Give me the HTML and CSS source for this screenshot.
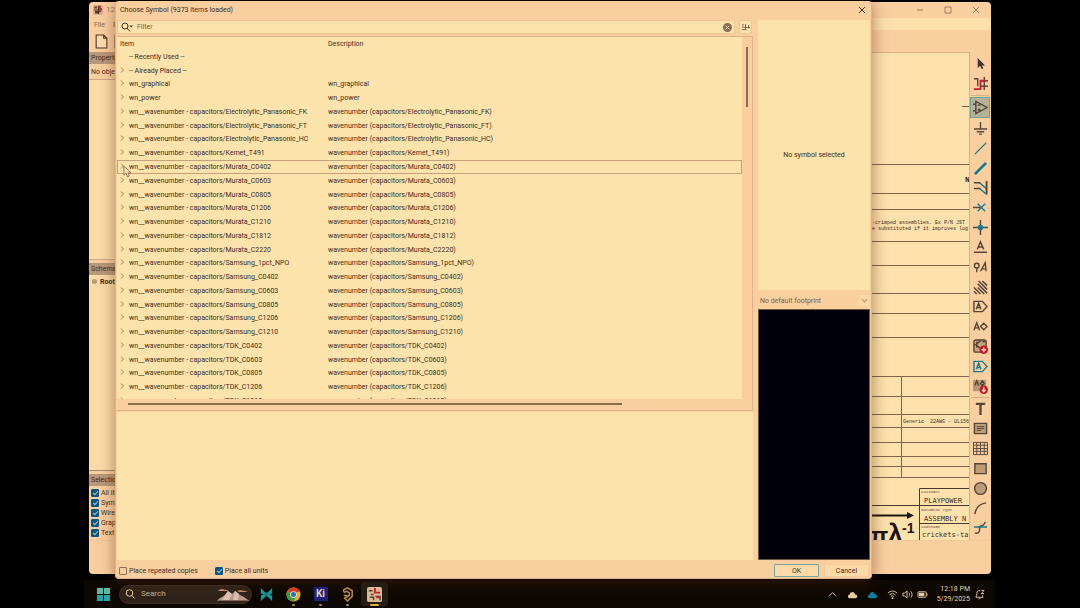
FILE: index.html
```
<!DOCTYPE html>
<html lang="en">
<head>
    <meta charset="UTF-8">
    <title>Choose Symbol</title>
    <meta name="viewport" content="width=device-width,initial-scale=1">
    <link rel="stylesheet" href="styles.css">
</head>
<body>
    <div class="screen">
        <div class="desktop">

            <!-- Schematic editor behind the dialog -->
            <div class="window editor">
                <header class="editor-title">
                    <svg class="app-icon" viewBox="0 0 20 20"><rect width="20" height="20" rx="3" fill="#d9b08c"/><path d="M3 3h5v4H3zM4 12h6v5H4z" fill="#5c3a2e"/><path d="M11 2v16M2 10h16" stroke="#4b3028" stroke-width="2"/><path d="M11 3h3v5h4M12 13h4" stroke="#c62032" stroke-width="3" fill="none"/></svg>
                    <span class="editor-name">12</span>
                    <div class="caption-buttons">
                        <button aria-label="Minimize"><svg viewBox="0 0 8 8"><path d="M1 4h6"/></svg></button>
                        <button aria-label="Maximize"><svg viewBox="0 0 8 8"><path d="M1 1h6v6H1z"/></svg></button>
                        <button aria-label="Close editor"><svg viewBox="0 0 8 8"><path d="M1 1l6 6M7 1L1 7"/></svg></button>
                    </div>
                </header>
                <nav class="menubar">
                    <a href="#">File</a>
                    <a href="#">Edit</a>
                </nav>
                <div class="toolbar">
                    <button aria-label="New"><svg viewBox="0 0 12 14"><path d="M1 1h7l3 3v9H1zM8 1v3h3"/></svg></button>
                    <button aria-label="Open"><svg viewBox="0 0 12 14"><path d="M1 1h10v12H1z"/></svg></button>
                </div>
                <div class="workspace">
                    <aside class="dock">
                        <section class="panel properties">
                            <h2>Properties</h2>
                            <p class="panel-row">No objects selected</p>
                            <div class="panel-box"></div>
                        </section>
                        <section class="panel hierarchy">
                            <h2>Schematic</h2>
                            <p class="root">Root</p>
                        </section>
                        <section class="panel filter">
                            <h2>Selection Filter</h2>
                            <label><input type="checkbox" checked>All items</label>
                            <label><input type="checkbox" checked>Symbols</label>
                            <label><input type="checkbox" checked>Wires</label>
                            <label><input type="checkbox" checked>Graphics</label>
                            <label><input type="checkbox" checked>Text</label>
                        </section>
                    </aside>
                    <main class="canvas">
                        <svg class="sheet" width="97" height="488" viewBox="872 52 97 488">
                            <path class="rule" d="M872 163.500h97M872 192.500h97M872 208.500h97M872 240.500h97M872 264.500h97M872 292.500h97M872 312.500h97M872 336.500h97M872 375.500h97M872 395.500h97M872 413.500h97M872 426.500h97M872 441.500h97M872 455.500h97M872 465.500h97M872 476.500h97M901.500 376v100M962 105.500h7"/>
                            <path class="frame" d="M969 487.500h-49.500V540M872 504.500h97M919 522.500h50"/>
                            <path d="M872 514.500h37" stroke="#1c1412" stroke-width="2"/>
                            <path d="M907 511l7 3.500-7 3.500z" fill="#1c1412"/>
                            <text class="bold" x="965" y="181" font-size="8">N</text>
                            <text x="872" y="223" font-size="5">-crimped assemblies. Ex P/N JST</text>
                            <text x="872" y="229" font-size="5">e substituted if it improves log</text>
                            <text x="903" y="422" font-size="5" xml:space="preserve">Generic  22AWG - UL156</text>
                            <text class="caption" x="921" y="492" font-size="4">Customer</text>
                            <text class="entry" x="924" y="502" font-size="7">PLAYPOWER</text>
                            <text class="caption" x="921" y="510" font-size="4">Document Type</text>
                            <text class="entry" x="924" y="520" font-size="7">ASSEMBLY N</text>
                            <text class="caption" x="921" y="527" font-size="4">Codename</text>
                            <text class="entry" x="922" y="536" font-size="7">crickets-ta</text>
                            <text class="formula" x="870" y="543" font-size="24">π</text>
                            <text class="formula" x="888" y="541" font-size="26">λ</text>
                            <text class="formula" x="902" y="532" font-size="14">-1</text>
                        </svg>
                    </main>
                    <div class="tools">
                        <button aria-label="Select"><svg viewBox="0 0 16 16"><path d="M5 2v11l2.500-2.500L9.500 14l1.500-1-1.500-3H13z" fill="#42352b" stroke="none"/></svg></button>
                        <button aria-label="Highlight net"><svg viewBox="0 0 16 16"><path d="M1 3h4v8M12 1v14M8 11h8M8 5h8"/><path class="red" d="M1 14h7V5h6"/></svg></button>
                        <hr>
                        <button class="active" aria-label="Place symbol"><svg viewBox="0 0 16 16"><path d="M3 1.500v13L15 8zM0 4.500h3M0 11.500h3M5 5.500h3M5 10.500h3M6.500 9v3"/></svg></button>
                        <button aria-label="Place power"><svg viewBox="0 0 16 16"><path d="M8 1v7M1 8.500h14M4 11.500h8M6.500 14h3"/></svg></button>
                        <button aria-label="Draw wire"><svg viewBox="0 0 16 16"><path class="teal" d="M2 14L14 2"/></svg></button>
                        <button aria-label="Draw bus"><svg viewBox="0 0 16 16"><path class="teal thick" d="M2 14L14 2"/></svg></button>
                        <button aria-label="Wire to bus entry"><svg viewBox="0 0 16 16"><path class="teal" d="M7 3l7 6M7 9l7 6"/><path d="M1 3h7M1 9h7"/><path d="M14.500 1v14.500" stroke-width="2"/></svg></button>
                        <button aria-label="No connect"><svg viewBox="0 0 16 16"><path d="M0 8h8"/><path class="teal" d="M5 4l8 8M13 4l-8 8"/></svg></button>
                        <button aria-label="Junction"><svg viewBox="0 0 16 16"><path d="M8 0v16M0 8h16"/><circle cx="8" cy="8" r="3" fill="#177a90" stroke="none"/></svg></button>
                        <button aria-label="Net label"><svg viewBox="0 0 16 16"><path d="M4.500 10L8 2l3.500 8M6 7.500h4M1 13h14"/></svg></button>
                        <button aria-label="Net class"><svg viewBox="0 0 16 16"><circle cx="4" cy="6" r="2.500"/><path d="M4 8.500V13M8 12l5-9 1 9M10 9.500h4"/></svg></button>
                        <button aria-label="Rule area"><svg viewBox="0 0 16 16"><path d="M10 1l5 5M6 1l9 9M5 4l10 10M5 8l7 7M1 8l7 7M1 12l3 3" stroke-width="1.600"/></svg></button>
                        <button aria-label="Global label"><svg viewBox="0 0 16 16"><path d="M1 2.500h9l5 5.500-5 5.500H1zM3.500 11L6 4.500 8.500 11M4.500 9h3"/></svg></button>
                        <button aria-label="Hierarchical label"><svg viewBox="0 0 16 16"><path d="M1 12l3-8 3 8M2 9.500h4M8 8l3.500-3.500L15 8l-3.500 3.500z"/></svg></button>
                        <button aria-label="Add sheet"><svg viewBox="0 0 16 16"><rect x="1" y="1" width="13" height="13" rx="2" fill="#c8a57c"/><path d="M1 6h3M4 3v6M4 5l4-3M4 7l4 3M10 3h3"/><circle class="badge" cx="11.500" cy="11.500" r="4.500"/><path class="mark" d="M11.500 9v5M9 11.500h5"/></svg></button>
                        <button aria-label="Sheet pin"><svg viewBox="0 0 16 16"><path class="teal" d="M1 2.500h9l5 5.500-5 5.500H1zM3.500 11L6 4.500 8.500 11M4.500 9h3"/></svg></button>
                        <button aria-label="Sync pins"><svg viewBox="0 0 16 16"><path d="M0 1h14v12H0z" fill="#b59873" stroke="none"/><path d="M2 7l2-5 2 5M8 5l2-3 2 3-2 2z"/><circle class="badge" cx="11.500" cy="11.500" r="4.500"/><path class="mark" d="M11.500 8.500v5M9.500 11.500l2 2 2-2"/></svg></button>
                        <hr>
                        <button aria-label="Text"><svg viewBox="0 0 16 16"><path d="M3 3h10M8 3v12" stroke-width="2.500"/></svg></button>
                        <button aria-label="Text box"><svg viewBox="0 0 16 16"><path d="M1.500 2.500h13v11h-13z" fill="#bc9d78"/><path d="M4 6h8M4 8h8M4 10h5" stroke-width="1"/></svg></button>
                        <button aria-label="Table"><svg viewBox="0 0 16 16"><path d="M.5 1.500h15v13H.5zM.5 4.500h15M.5 8h15M.5 11h15M4 1.500v13M8 1.500v13M12 1.500v13" stroke-width="1"/></svg></button>
                        <button aria-label="Rectangle"><svg viewBox="0 0 16 16"><path d="M2 3h12v10.500H2z" fill="#bc9d78"/></svg></button>
                        <button aria-label="Circle"><svg viewBox="0 0 16 16"><circle cx="8" cy="8" r="6.300" fill="#bc9d78"/></svg></button>
                        <button aria-label="Arc"><svg viewBox="0 0 16 16"><path d="M2 14C3 7 7 3 14 2"/></svg></button>
                        <button aria-label="Bezier"><svg viewBox="0 0 16 16"><path d="M2 14c6 1 5-4 5-6.500s4 1 6-5.500"/><path class="teal" d="M1 7.500h14"/></svg></button>
                    </div>
                </div>
                <footer class="statusbar"></footer>
            </div>

            <!-- Choose symbol dialog -->
            <div class="window dialog" role="dialog" aria-labelledby="dialogTitle">
                <header class="dialog-title">
                    <h1 id="dialogTitle">Choose Symbol (9373 items loaded)</h1>
                    <button class="close-btn" aria-label="Close"><svg viewBox="0 0 8 8"><path d="M1 1l6 6M7 1L1 7"/></svg></button>
                </header>
                <div class="dialog-body">
                    <div class="library">
                        <div class="search-row">
                            <div class="search-box">
                                <svg class="search-icon" viewBox="0 0 12 10"><circle cx="4" cy="4" r="3"/><path d="M6 6l3 3.500"/><path class="arrow" d="M8.500 3.500h3.500l-1.700 2z"/></svg>
                                <input type="text" placeholder="Filter" aria-label="Filter">
                                <button class="clear-btn" aria-label="Clear"><svg viewBox="0 0 10 10"><circle cx="5" cy="5" r="5" stroke="none"/><path d="M3 3l4 4M7 3L3 7"/></svg></button>
                            </div>
                            <button class="sort-btn" aria-label="Sort"><svg viewBox="0 0 10 8"><path d="M1 1h2M1 3.500h2M1 6.500h5M5 0v5M3.500 3.500L5 5l1.500-1.500M7 4h3M8.500 1v4"/></svg></button>
                        </div>
                        <div class="tree">
                            <div class="tree-view">
                                <table>
                                    <thead>
                                        <tr><th class="col-item">Item</th><th>Description</th></tr>
                                    </thead>
                                    <tbody id="treeBody"></tbody>
                                </table>
                            </div>
                            <div class="scroll-v"><div class="thumb"></div></div>
                            <div class="scroll-h"><div class="thumb"></div></div>
                        </div>
                        <div class="details"></div>
                    </div>
                    <div class="preview">
                        <div class="symbol-preview">No symbol selected</div>
                        <div class="footprint-select">
                            <select aria-label="Footprint" disabled>
                                <option>No default footprint</option>
                            </select>
                            <svg viewBox="0 0 8 8"><path d="M2 3l2 2 2-2"/></svg>
                        </div>
                        <div class="footprint-preview"></div>
                    </div>
                </div>
                <footer class="dialog-footer">
                    <label><input type="checkbox">Place repeated copies</label>
                    <label><input type="checkbox" checked>Place all units</label>
                    <div class="actions">
                        <button class="ok-btn">OK</button>
                        <button>Cancel</button>
                    </div>
                </footer>
            </div>
        </div>

        <div class="taskbar">
            <button class="task" aria-label="Start"><svg viewBox="0 0 16 16"><path d="M1 1h6.500v6.500H1zM8.500 1H15v6.500H8.500z" fill="#5fb8a0"/><path d="M1 8.500h6.500V15H1zM8.500 8.500H15V15H8.500z" fill="#2f9fa8"/></svg></button>
            <div class="task-search">
                <svg viewBox="0 0 10 10"><circle cx="4.500" cy="4" r="3.300"/><path d="M7 6.500L9.500 9.500"/></svg>
                <input type="text" placeholder="Search" aria-label="Search">
                <svg class="scene" viewBox="0 0 32 14"><path d="M1 13c2-3 5-3 7-5l3-4 4 3 3-3 5 4 4 2 4 3z" fill="#b8998c"/><path d="M11 4l4 3-3 6H5l3-5zM18 4l4 3-1 6h-5z" fill="#dcc0b0"/><path d="M1 3c2 0 2-1 4-1s2 1 6 1v1H2zM20 4c2-1 4-1 8 0l3 1h-9z" fill="#c68d68"/><path d="M0 13h32v1H0z" fill="#80655c"/></svg>
            </div>
            <button class="task" aria-label="Editor"><svg viewBox="0 0 16 16"><path d="M2 1l5 5V10l-5 5V9l3-1-3-1zM14 1L9 6v4l5 5V9l-3-1 3-1z" fill="#169a9b"/><path d="M6 6h4v4H6z" fill="#23797f"/></svg></button>
            <button class="task running" aria-label="Chrome"><svg viewBox="0 0 16 16"><circle cx="8" cy="8" r="7.500" fill="#e8b422"/><path d="M8 8L1.500 4.300A7.500 7.500 0 0 1 14.500 4.300z" fill="#d83a2a"/><path d="M8 8L1.500 4.300A7.500 7.500 0 0 0 8 15.500l3-6z" fill="#3a9c4c"/><path d="M8 4.300h6.500" stroke="#d83a2a"/><circle cx="8" cy="8" r="3.600" fill="#f6dfb8"/><circle cx="8" cy="8" r="2.700" fill="#2c73b8"/></svg></button>
            <button class="task running" aria-label="KiCad"><span class="kicad">Ki</span></button>
            <button class="task running" aria-label="Altium"><svg viewBox="0 0 16 16"><path d="M4 5V3l4-2 5 3v6l-5 5-3-3 5-3V6L7 4.500 4 6M4 9h4" fill="none" stroke="#b98b46" stroke-width="1.600"/></svg></button>
            <button class="task running current" aria-label="Schematic editor"><svg viewBox="0 0 16 16"><rect width="16" height="16" rx="2" fill="#dcb996"/><path d="M2 4h4M3 11h4v3M9 10h5v4M4 8h3" stroke="#5a4034" stroke-width="1.500" fill="none"/><path d="M8.500 1v5H14M10 11h4" stroke="#c62032" stroke-width="2" fill="none"/></svg></button>
            <div class="tray">
                <svg viewBox="0 0 12 12"><path d="M2 8l4-4 4 4" class="line"/></svg>
                <svg viewBox="0 0 12 12"><path d="M2.500 10C0 9 1 6 3 6c1-4 5-3 6 0 3 0 3 4 0 4z" fill="#e8cda6"/></svg>
                <svg viewBox="0 0 12 12"><path d="M2.500 10C0 9 1 6 3 6c1-4 5-3 6 0 3 0 3 4 0 4z" fill="#137f9a"/></svg>
                <div class="quick">
                    <svg viewBox="0 0 12 12"><path class="line" d="M1 4.500c3-3 7-3 10 0M2.700 6.500c2-2 4.600-2 6.600 0M4.300 8.300c1-1 2.400-1 3.400 0"/><circle cx="6" cy="10" r="1" fill="#e8cda6"/></svg>
                    <svg viewBox="0 0 12 12"><path class="line" d="M1 4.500h2L5.500 2v8L3 7.500H1zM7.500 4c1 1 1 3 0 4M9.500 2.500c2 2 2 5 0 7"/></svg>
                    <svg viewBox="0 0 12 12"><rect x="1" y="3" width="9" height="6" rx="1" class="line"/><path d="M2 4h6v4H2zM10.500 5h1v2h-1z" fill="#e8cda6"/></svg>
                </div>
                <div class="clock"><span>12:18 PM</span><span>5/29/2025</span></div>
                <svg viewBox="0 0 12 12"><path class="line" d="M7 2C4 1 3 3 3 5v2L2 9h8L9 7M5 10.500h2M8 1.500h3L8 5h3"/></svg>
            </div>
        </div>
    </div>

    <script>
        const groups = ['wn_graphical', 'wn_power'];
        const libraries = [
            'Electrolytic_Panasonic_FK', 'Electrolytic_Panasonic_FT', 'Electrolytic_Panasonic_HC',
            'Kemet_T491',
            'Murata_C0402', 'Murata_C0603', 'Murata_C0805', 'Murata_C1206',
            'Murata_C1210', 'Murata_C1812', 'Murata_C2220',
            'Samsung_1pct_NPO', 'Samsung_C0402', 'Samsung_C0603', 'Samsung_C0805',
            'Samsung_C1206', 'Samsung_C1210',
            'TDK_C0402', 'TDK_C0603', 'TDK_C0805', 'TDK_C1206', 'TDK_C1210'
        ];
        const focused = 'Murata_C0402';

        const rows = [
            { item: '-- Recently Used --', desc: '', leaf: true },
            { item: '-- Already Placed --', desc: '' },
            ...groups.map(name => ({ item: name, desc: name })),
            ...libraries.map(name => ({
                item: `wn__wavenumber - capacitors/${name}`,
                desc: `wavenumber (capacitors/${name})`,
                focus: name === focused
            }))
        ];

        const chevron = '<svg class="chevron" viewBox="0 0 6 6"><path d="M1 .5L3.500 3 1 5.500"/></svg>';
        const pointer = '<svg class="pointer" viewBox="0 0 10 14"><path d="M1 1v10l2.500-2L5 13l2-1-1.500-3.500H9z"/></svg>';

        document.getElementById('treeBody').innerHTML = rows.map(row => `
            <tr class="${row.focus ? 'focused' : ''}">
                <td class="${row.leaf ? 'leaf' : ''}">${row.leaf ? '' : chevron}${row.item}${row.focus ? pointer : ''}</td>
                <td>${row.desc}</td>
            </tr>
        `).join('');
    </script>
</body>
</html>
```
FILE: styles.css
```
* {
    margin: 0;
    padding: 0;
    box-sizing: border-box;
}

body {
    font-family: Roboto, 'Liberation Sans', sans-serif;
    font-size: 7px;
    font-variant-ligatures: none;
    line-height: 10px;
    color: #3f2d22;
    background: #000;
}

button,
input,
select {
    font: inherit;
    color: inherit;
    border: none;
    background: none;
}

svg {
    display: block;
    flex: none;
}

.screen {
    display: flex;
    flex-direction: column;
    height: 100vh;
    padding: 0 85px 0 84px;
    overflow: hidden;
}

.desktop {
    position: relative;
    flex: 1;
    min-height: 0;
}

.window {
    position: absolute;
    display: flex;
    flex-direction: column;
    background: #facfa0;
    border-radius: 4px;
    overflow: hidden;
}

/* Editor window */
.editor {
    inset: 2px 4px 6px 5px;
}

.editor-title {
    display: flex;
    align-items: center;
    height: 16px;
    padding: 0 1px 0 4px;
    gap: 3px;
    color: #a37b5f;
}

.app-icon {
    width: 10px;
    height: 10px;
}

.editor-name {
    flex: 1;
    font-size: 8px;
}

.caption-buttons {
    display: flex;
}

.caption-buttons button {
    width: 28px;
    padding: 0 10px;
}

.caption-buttons svg {
    width: 8px;
    height: 8px;
    fill: none;
    stroke: #a37b5f;
}

.menubar {
    display: flex;
    align-items: center;
    gap: 8px;
    height: 12px;
    padding: 1px 0 0 5px;
    background: linear-gradient(to right, #facfa0, #fce0aa 50%);
}

.menubar a {
    color: #8a6850;
    text-decoration: none;
}

.toolbar {
    display: flex;
    align-items: center;
    gap: 6px;
    height: 22px;
    padding-left: 6px;
}

.toolbar svg {
    width: 13px;
    height: 15px;
    fill: #fbdcac;
    stroke: #493329;
}

.workspace {
    display: flex;
    flex: 1;
    min-height: 0;
}

.statusbar {
    height: 34px;
    border-top: 1px solid #f5c897;
}

/* Left dock */
.dock {
    display: flex;
    flex-direction: column;
    gap: 3px;
    width: 140px;
}

.panel h2 {
    height: 12px;
    padding-left: 2px;
    font-size: 7px;
    font-weight: normal;
    line-height: 13px;
    background: #b8987a;
}

.panel {
    display: flex;
    flex-direction: column;
}

.properties {
    flex: 208;
}

.panel-row {
    padding: 3px 2px 2px;
}

.panel-box {
    flex: 1;
    background: #fbdba8;
    border: 1px solid #cfa785;
    border-width: 1px 0;
}

.hierarchy {
    flex: 208;
    background: #fbdba8;
    border-bottom: 1px solid #a88a6d;
}

.root {
    display: flex;
    align-items: center;
    gap: 3px;
    padding: 2px 3px;
    font-weight: bold;
}

.root::before {
    content: '';
    width: 5px;
    height: 5px;
    border-radius: 50%;
    background: #b8987a;
}

.filter {
    padding-bottom: 2px;
}

.filter h2 {
    margin-bottom: 2px;
}

label {
    display: flex;
    align-items: center;
    gap: 2px;
}

.filter label {
    padding-left: 2px;
}

input[type="checkbox"] {
    appearance: none;
    width: 8px;
    height: 8px;
    border: 1px solid #927056;
    border-radius: 1px;
}

input[type="checkbox"]:checked {
    border-color: #07568a;
    background: #07568a;
}

input[type="checkbox"]:checked::before {
    content: '';
    display: block;
    width: 4px;
    height: 2px;
    margin: 1px;
    border: solid #b9bfa6;
    border-width: 0 0 1px 1px;
    transform: rotate(-45deg);
}

/* Sheet */
.canvas {
    display: flex;
    flex: 1;
    justify-content: flex-end;
    overflow: hidden;
    background: #fce1ac;
    border: 1px solid #d9b189;
    border-width: 1px 1px 0 0;
}

.sheet {
    font-family: 'Liberation Mono', monospace;
    fill: #3b2b24;
}

.sheet .rule {
    stroke: #806650;
    fill: none;
}

.sheet .frame {
    stroke: #4b382d;
    fill: none;
}

.sheet .bold {
    font-weight: bold;
}

.sheet .entry {
    font-family: 'DejaVu Sans Mono', monospace;
}

.sheet .caption {
    font-style: italic;
    fill: #6e4a3c;
}

.sheet .formula {
    font-family: 'Liberation Sans', sans-serif;
    font-weight: bold;
    fill: #1c1412;
}

/* Right toolbar */
.tools {
    display: flex;
    flex-direction: column;
    width: 21px;
    padding: 2px 1px 2px 0;
}

.tools button {
    display: flex;
    flex: 1;
    min-height: 0;
    align-items: center;
    justify-content: center;
}

.tools .active {
    background: #b5b296;
    border: 1px solid #6fa09a;
}

.tools hr {
    height: 1px;
    margin: 1px;
    border: none;
    background: #dcae88;
}

.tools svg {
    width: 15px;
    height: 15px;
    fill: none;
    stroke: #54463a;
    stroke-width: 1.5px;
}

.tools .red {
    stroke: #c41e35;
    stroke-width: 2px;
}

.tools .teal {
    stroke: #177a90;
}

.tools .thick {
    stroke-width: 3px;
}

.tools .badge {
    fill: #bd1530;
    stroke: none;
}

.tools .mark {
    stroke: #fbdcac;
}

/* Dialog */
.dialog {
    inset: 1px 123px 1px 31px;
    border: 1px solid #dfb38a;
    border-top: none;
    box-shadow: 0 2px 16px rgba(90, 40, 10, 0.5);
}

.dialog-title {
    display: flex;
    align-items: center;
    justify-content: space-between;
    height: 17px;
    padding: 0 5px 0 4px;
}

.dialog-title h1 {
    font-size: 7px;
    font-weight: normal;
}

.close-btn svg {
    width: 8px;
    height: 8px;
    fill: none;
    stroke: #493329;
}

.dialog-body {
    display: flex;
    flex: 1;
    gap: 5px;
    min-height: 0;
    padding: 2px 1px 0;
}

.library {
    display: flex;
    flex: 1;
    flex-direction: column;
    min-width: 0;
}

.search-row {
    display: flex;
    gap: 4px;
    height: 14px;
}

.search-box {
    display: flex;
    flex: 1;
    align-items: center;
    gap: 4px;
    padding: 0 2px 0 3px;
    background: #fce2ab;
    border: 1px solid #efc497;
}

.search-icon {
    width: 12px;
    height: 10px;
    fill: none;
    stroke: #493329;
}

.search-icon .arrow {
    fill: #493329;
    stroke: none;
}

.search-box input {
    flex: 1;
    outline: none;
}

.search-box input::placeholder {
    color: #80604a;
}

.clear-btn svg {
    width: 9px;
    height: 9px;
    fill: #8b6c56;
    stroke: #fce2ab;
}

.sort-btn {
    width: 13px;
    margin-right: 1px;
    padding: 0 1px;
    background: #fce2ab;
    border: 1px solid #efc497;
    border-radius: 2px;
}

.sort-btn svg {
    width: 9px;
    height: 7px;
    fill: none;
    stroke: #6b4f3e;
}

.tree {
    display: grid;
    grid-template-columns: 1fr 10px;
    grid-template-rows: 1fr 11px;
    flex: 374;
    min-height: 0;
    margin-top: 2px;
    border: 1px solid #dfb38a;
    border-left: none;
}

.tree-view {
    min-height: 0;
    overflow: hidden;
    background: #fce2ab;
}

.tree table {
    width: 100%;
    height: 371px;
    table-layout: fixed;
    border-collapse: collapse;
}

.tree th,
.tree td {
    padding: 0;
    line-height: 8px;
    text-align: left;
    font-weight: normal;
    white-space: nowrap;
}

.tree th {
    height: 13px;
}

.tree .col-item {
    width: 211px;
    padding-left: 3px;
}

.tree td:first-child {
    padding-left: 3px;
}

.tree td.leaf {
    padding-left: 12px;
}

.focused {
    outline: 1px solid #c9a07a;
    outline-offset: -1px;
}

.focused td:first-child {
    position: relative;
}

.chevron {
    display: inline-block;
    width: 6px;
    height: 6px;
    margin-right: 3px;
    fill: none;
    stroke: #a5805f;
}

.pointer {
    position: absolute;
    left: 6px;
    top: 5px;
    width: 9px;
    height: 13px;
    fill: #fce2ab;
    stroke: #8b6c56;
}

.scroll-v {
    padding: 10px 4px;
}

.scroll-v .thumb {
    width: 2px;
    height: 60px;
    background: #8b6c4e;
}

.scroll-h {
    padding: 4px 11px;
}

.scroll-h .thumb {
    width: 82%;
    height: 2px;
    background: #8b6c4e;
}

.details {
    flex: 149;
    margin-top: 1px;
    background: #fce2ab;
}

.preview {
    display: flex;
    flex-direction: column;
    width: 112px;
}

.symbol-preview {
    display: flex;
    flex: 272;
    align-items: center;
    justify-content: center;
    background: #fce2ab;
}

.footprint-select {
    display: flex;
    align-items: center;
    justify-content: space-between;
    height: 19px;
    padding-top: 2px;
}

.footprint-select select {
    flex: 1;
    appearance: none;
    padding-left: 2px;
    color: #80604a;
    opacity: 1;
}

.footprint-select svg {
    width: 11px;
    height: 11px;
    fill: none;
    stroke: #c39c78;
    background: #fcd9a7;
}

.footprint-preview {
    flex: 250;
    background: #00000a;
    border: 1px solid #6d5842;
}

.dialog-footer {
    display: flex;
    align-items: center;
    gap: 17px;
    height: 18px;
    padding: 3px 2px 0 3px;
}

.actions {
    display: flex;
    gap: 5px;
    margin-left: auto;
}

.actions button {
    width: 45px;
    height: 13px;
    background: #fcdaa8;
    border: 1px solid #f6cb9b;
    border-radius: 1px;
}

.actions .ok-btn {
    border-color: #78a49b;
}

/* Taskbar */
.taskbar {
    display: flex;
    align-items: center;
    height: 28px;
    padding: 0 10px 0 6px;
    background: #0e0803;
    color: #e8cda6;
}

.task {
    position: relative;
    display: flex;
    align-items: center;
    justify-content: center;
    width: 27px;
    height: 24px;
}

.task svg {
    width: 15px;
    height: 15px;
}

.task.running::after {
    content: '';
    position: absolute;
    bottom: 0;
    width: 3px;
    height: 2px;
    border-radius: 1px;
    background: #9a8468;
}

.task.current {
    background: #261d15;
    border-radius: 3px;
}

.task.current::after {
    width: 9px;
    background: #e6b143;
}

.kicad {
    width: 14px;
    height: 14px;
    font-size: 10px;
    font-weight: bold;
    line-height: 14px;
    background: #1d237c;
}

.task-search {
    display: flex;
    align-items: center;
    gap: 6px;
    width: 133px;
    height: 19px;
    margin: 0 1px 0 2px;
    padding: 0 2px 0 5px;
    background: #30241a;
    border: 1px solid #3d3024;
    border-radius: 10px;
}

.task-search svg {
    width: 10px;
    height: 10px;
    fill: none;
    stroke: #e8cda6;
}

.task-search input {
    flex: 1;
    min-width: 0;
    font-size: 8px;
}

.task-search input::placeholder {
    color: #c8ae8a;
}

.task-search .scene {
    width: 32px;
    height: 14px;
    stroke: none;
}

.tray {
    display: flex;
    align-items: center;
    gap: 9px;
    margin-left: auto;
}

.tray svg {
    width: 11px;
    height: 11px;
}

.tray .line {
    fill: none;
    stroke: #e8cda6;
}

.quick {
    display: flex;
    gap: 4px;
}

.clock {
    display: flex;
    flex-direction: column;
    font-size: 7px;
    text-align: right;
}

.tray .clock + svg {
    margin-left: -5px;
}
```
